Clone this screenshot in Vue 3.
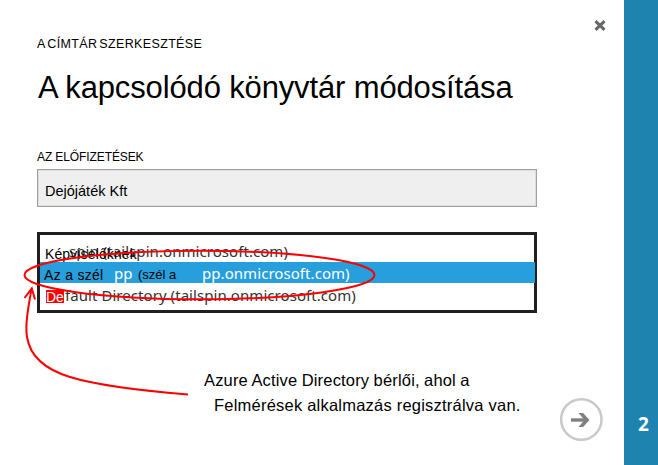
<script setup>
const step = 2
const account = 'Dejójáték Kft'
</script>

<template>
  <div class="page">
    <main class="dialog">
      <div class="crumb"><span>A CÍMTÁR</span><span class="crumb-end">SZERKESZTÉSE</span></div>
      <h1>A kapcsolódó könyvtár módosítása</h1>
      <div class="label">AZ ELŐFIZETÉSEK</div>
      <div class="field">{{ account }}</div>
      <div class="list">
        <div class="row first">
          <span class="segoe tail">spin (tailspin.onmicrosoft.com)</span>
          <span class="over rep">Képviselőknek</span>
        </div>
        <div class="row selected">
          <span class="over az">Az a szél</span>
          <span class="segoe pp">pp</span>
          <span class="over szel">(szél a</span>
          <span class="segoe domain">pp.onmicrosoft.com)</span>
        </div>
        <div class="row last">
          <span class="mark">De</span>
          <span class="segoe default">fault Directory (tailspin.onmicrosoft.com)</span>
        </div>
      </div>
      <div class="note">
        <div class="n1">Azure Active Directory bérlői, ahol a</div>
        <div class="n2">Felmérések alkalmazás regisztrálva van.</div>
      </div>
    </main>
    <aside class="steps">{{ step }}</aside>

    <svg class="close" width="14" height="14" viewBox="0 0 14 14"><path d="M2.5 3.2 11.5 11.8M11.5 3.2 2.5 11.8" stroke="#666" stroke-width="3" fill="none" /></svg>
    <svg class="next" width="44" height="44" viewBox="0 0 44 44">
      <circle cx="22.3" cy="22.5" r="20.2" fill="#fff" stroke="#c9c9c9" stroke-width="2.5" />
      <path d="M12 23H27" stroke="#808080" stroke-width="3.4" />
      <path d="M19.5 16h4.6l6.4 7-6.4 7H19.5l6-7z" fill="#808080" />
    </svg>
    <svg class="ink" width="658" height="465" viewBox="0 0 658 465" fill="none" stroke="#fa0000" stroke-width="2">
      <ellipse cx="199.5" cy="275" rx="175" ry="24.3" />
      <path d="M188 394.5C139 390.5 96 385 70 377C44 369 30 356 27 337C25 325 28 309 31.5 289" />
      <path d="M24.5 298 31.8 288.5 35 299.5" />
    </svg>
  </div>
</template>

<style>
body { margin: 0; background: #fff; }
</style>

<style scoped>
.page { position: relative; display: flex; width: 658px; height: 465px; overflow: hidden; font-family: "Liberation Sans", Arial, sans-serif; color: #000; background: #fff; white-space: nowrap; }
.dialog { box-sizing: border-box; width: 624px; padding: 36px 0 0 37px; }
.crumb { display: flex; gap: 2px; height: 16px; line-height: 16px; font-size: 12.5px; }
.crumb span:first-child { letter-spacing: 0.35px; word-spacing: -1.5px; }
.crumb-end { letter-spacing: 0.35px; }
h1 { margin: 15px 0 0 1px; height: 40px; line-height: 41px; font-size: 31px; font-weight: 400; letter-spacing: -0.14px; }
.label { margin-top: 42px; height: 16px; line-height: 16px; font-size: 12px; letter-spacing: -0.1px; }
.field { box-sizing: border-box; width: 500px; height: 38px; margin-top: 4px; padding-left: 7px; border: 1px solid #a0a0a0; box-shadow: inset 0 0 0 1px #dcdcdc; background: #efefef; font-size: 14.5px; line-height: 42px; }
.list { box-sizing: border-box; width: 500px; height: 81px; margin-top: 25px; border: 3px solid #202022; }
.row { position: relative; height: 27px; font-size: 14px; }
.row span { position: absolute; line-height: 20px; }
.selected { width: 495px; height: 21px; background: #269fdc; }
.segoe { font-family: "Noto Sans", "Open Sans", sans-serif; font-size: 15px; letter-spacing: 0.06px; color: #333; }
.tail { left: 29px; top: 6px; }
.row .rep { left: 5px; top: 9px; letter-spacing: 0.12px; }
.row .az { left: 4px; top: 3px; letter-spacing: 0.3px; }
.selected .segoe { color: #fff; top: 1px; }
.pp { left: 74px; }
.row .szel { left: 98px; top: 3px; font-size: 13px; }
.domain { left: 162px; }
.row .mark { left: 6px; top: 7px; width: 18px; height: 13px; line-height: 14px; background: #f00; color: #fff; font-size: 14px; }
.default { left: 25px; top: 2px; }
.note { margin: 55px 0 0 167px; font-size: 16.5px; line-height: 25px; }
.n1 { letter-spacing: 0.17px; word-spacing: -0.4px; }
.n2 { padding-left: 10px; letter-spacing: 0.22px; }
.steps { width: 34px; box-sizing: border-box; padding: 412px 0 0 5px; background: #1e83af; color: #fff; text-align: center; font: 700 19px/24px "Open Sans", sans-serif; }
.close { position: absolute; left: 593px; top: 18px; }
.next { position: absolute; left: 559px; top: 397px; }
.ink { position: absolute; left: 0; top: 0; }
</style>
